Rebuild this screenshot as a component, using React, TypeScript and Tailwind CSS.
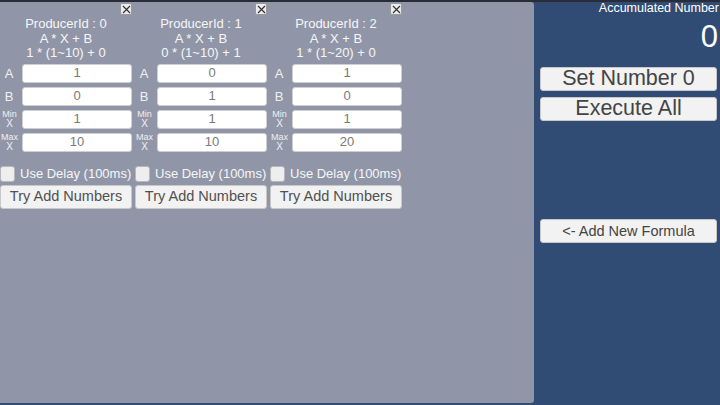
import React from 'react';

const font = { fontFamily: '"Liberation Sans", Arial, sans-serif' };

type Producer = { id: number; a: string; b: string; min: string; max: string; formula: string };

const producers: Producer[] = [
  { id: 0, a: '1', b: '0', min: '1', max: '10', formula: '1 * (1~10) + 0' },
  { id: 1, a: '0', b: '1', min: '1', max: '10', formula: '0 * (1~10) + 1' },
  { id: 2, a: '1', b: '0', min: '1', max: '20', formula: '1 * (1~20) + 0' },
];

const CloseButton = () => (
  <div className="absolute right-0 top-[1px] w-[12px] h-[12px] rounded-[2px] bg-[#ececec] border border-[#9a9a9a] flex items-center justify-center">
    <svg width="9" height="9" viewBox="0 0 9 9">
      <path d="M1 1 L8 8 M8 1 L1 8" stroke="#333" strokeWidth="1.2" />
    </svg>
  </div>
);

const Field = ({ label, value }: { label: React.ReactNode; value: string }) => (
  <div className="flex items-center h-[19px]">
    <div className="w-[22px] flex flex-col items-center justify-center text-[#f0f0f0] leading-none">{label}</div>
    <div className="flex-1 h-[19px] bg-white rounded-[3px] border border-[#cfcfcf] flex items-center justify-center text-[13px] text-[#7a7a7a]">
      {value}
    </div>
  </div>
);

const TinyLabel = ({ top }: { top: string }) => (
  <div className="flex flex-col items-center text-[9px] leading-[9px] -ml-[3px]">
    <span>{top}</span>
    <span className="text-[10px]">X</span>
  </div>
);

const ProducerColumn = ({ p }: { p: Producer }) => (
  <div className="w-[132px] flex flex-col relative">
    <CloseButton />
    <div className="pt-[15px] flex flex-col items-center text-[#f6f6f6] text-[13px] leading-[14.5px]">
      <span>ProducerId : {p.id}</span>
      <span>A * X + B</span>
      <span>{p.formula}</span>
    </div>
    <div className="mt-[3px] flex flex-col gap-[4px]">
      <Field label={<span className="text-[13px] -ml-[4px]">A</span>} value={p.a} />
      <Field label={<span className="text-[13px] -ml-[4px]">B</span>} value={p.b} />
      <Field label={<TinyLabel top="Min" />} value={p.min} />
      <Field label={<TinyLabel top="Max" />} value={p.max} />
    </div>
    <div className="mt-[14px] flex items-center h-[16px]">
      <div className="w-[15px] h-[16px] bg-[#eeeeee] rounded-[3px] border border-[#b8b8b8]" />
      <span className="ml-[5px] text-[13px] text-[#f6f6f6] whitespace-nowrap">Use Delay (100ms)</span>
    </div>
    <button className="mt-[3px] h-[24px] w-full bg-[#f2f2f2] rounded-[3px] border border-[#c8c8c8] text-[14.5px] text-[#505050]">
      Try Add Numbers
    </button>
  </div>
);

const SideButton = ({ children, size }: { children: React.ReactNode; size: string }) => (
  <button className={`w-full h-[24px] bg-[#f2f2f2] rounded-[3px] border border-[#c8c8c8] text-[#444] leading-none ${size}`}>
    {children}
  </button>
);

export default function App() {
  return (
    <div style={font} className="w-[720px] h-[405px] bg-[#282c36] overflow-hidden">
      <div className="mt-[2px] h-[403px] flex bg-[#304c74]">
        {/* Producers panel */}
        <div className="w-[534px] h-[401px] bg-[#9096a8] rounded-r-[3px] flex gap-[3px]">
          {producers.map((p) => (
            <ProducerColumn key={p.id} p={p} />
          ))}
        </div>

        {/* Side panel */}
        <div className="flex-1 flex flex-col pl-[6px] pr-[3px]">
          <div className="text-right text-white text-[12.5px] leading-[13px] -mr-[2px]">Accumulated Number</div>
          <div className="text-right text-white text-[31px] leading-[34px] mt-[5px] -mr-[1px]">0</div>
          <div className="mt-[13px] flex flex-col gap-[6px]">
            <SideButton size="text-[21.5px]">Set Number 0</SideButton>
            <SideButton size="text-[21.5px]">Execute All</SideButton>
          </div>
          <div className="mt-[98px]">
            <SideButton size="text-[14.5px]">&lt;- Add New Formula</SideButton>
          </div>
        </div>
      </div>
    </div>
  );
}
